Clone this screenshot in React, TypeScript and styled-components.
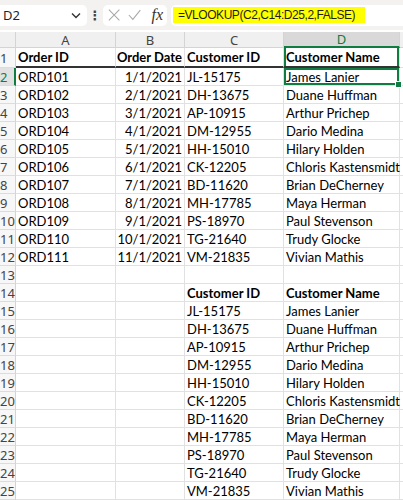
import { Fragment } from 'react';
import styled, { createGlobalStyle } from 'styled-components';

const GlobalStyle = createGlobalStyle`
    html, body {
        margin: 0;
        padding: 0;
        background: #ffffff;
        overflow: hidden;
    }
`;

const GREEN = '#107c41';

const Page = styled.div`
    width: 403px;
    height: 500px;
    overflow: hidden;
    background: #ffffff;
`;

const FormulaBar = styled.div`
    height: 30px;
    background: #f3f2f1;
    display: flex;
    align-items: center;
    box-sizing: border-box;
`;

const NameBox = styled.div`
    width: 87px;
    height: 21px;
    background: #ffffff;
    border-radius: 0 5px 5px 0;
    display: flex;
    align-items: center;
    justify-content: space-between;
    box-sizing: border-box;
    padding: 0 6px 0 3px;
    font-family: "Noto Sans", sans-serif;
    font-size: 13px;
    color: #1f1f1f;
`;

const Dots = styled.div`
    width: 16px;
    text-align: center;
    font-family: "DejaVu Sans", sans-serif;
    font-size: 13px;
    font-weight: bold;
    color: #444;
`;

const ActionBox = styled.div`
    width: 64px;
    height: 21px;
    background: #ffffff;
    border-radius: 5px;
    display: flex;
    align-items: center;
    gap: 8px;
    box-sizing: border-box;
    padding: 0 4px 0 5px;
`;

const FxLabel = styled.span`
    font-family: "Liberation Serif", serif;
    font-style: italic;
    font-size: 16px;
    color: #333;
    margin-left: 2px;
`;

const FormulaInput = styled.div`
    flex: 1;
    height: 21px;
    margin-left: 4px;
    background: #ffffff;
    border-radius: 5px 0 0 5px;
    display: flex;
    align-items: center;
    padding-left: 2px;
`;

const Highlight = styled.span`
    background: #ffff00;
    padding: 1px 10px 0 5px;
    font-family: "Liberation Sans", sans-serif;
    font-size: 12px;
    letter-spacing: -0.45px;
    color: #1f1f1f;
    line-height: 15px;
`;

const Grid = styled.div`
    margin-top: 2px;
    display: grid;
    grid-template-columns: 16px 100px 69px 99px 116px 20px;
    grid-template-rows: 16px 20px;
    grid-auto-rows: 18px;
`;

const ColHead = styled.div<{ $active?: boolean }>`
    background: ${p => (p.$active ? '#d9d9d9' : '#f0f0f0')};
    border-right: 1px solid #d4d4d4;
    border-bottom: ${p => (p.$active ? `2px solid ${GREEN}` : '1px solid #d4d4d4')};
    box-sizing: border-box;
    display: flex;
    align-items: center;
    justify-content: center;
    font-family: "Noto Sans", sans-serif;
    font-size: 13px;
    color: ${p => (p.$active ? GREEN : '#444')};
`;

const RowHead = styled.div<{ $active?: boolean }>`
    background: ${p => (p.$active ? '#e1e1e1' : '#f7f7f7')};
    border-right: ${p => (p.$active ? `2px solid ${GREEN}` : '1px solid #d4d4d4')};
    border-bottom: 1px solid #dcdcdc;
    box-sizing: border-box;
    display: flex;
    align-items: center;
    overflow: hidden;
    font-family: "Noto Sans", sans-serif;
    font-size: 13px;
    color: ${p => (p.$active ? GREEN : '#444')};
    white-space: nowrap;
`;

const Cell = styled.div<{ $bold?: boolean; $right?: boolean; $thick?: boolean; $sel?: 'top' | 'box' }>`
    position: relative;
    border-right: 1px solid #e1e1e1;
    border-bottom: ${p => (p.$thick ? '2px solid #333' : '1px solid #e1e1e1')};
    box-sizing: border-box;
    display: flex;
    align-items: center;
    justify-content: ${p => (p.$right ? 'flex-end' : 'flex-start')};
    padding: 0 2px;
    white-space: nowrap;
    font-family: Lato, sans-serif;
    font-size: 13px;
    font-weight: ${p => (p.$bold ? 700 : 400)};
    color: #000;
    box-shadow: ${p =>
        p.$sel === 'box'
            ? `inset 0 0 0 2px ${GREEN}`
            : p.$sel === 'top'
            ? `inset 2px 0 0 ${GREEN}, inset -2px 0 0 ${GREEN}`
            : 'none'};
`;

const FillHandle = styled.span`
    position: absolute;
    right: -3px;
    bottom: -3px;
    width: 5px;
    height: 5px;
    background: ${GREEN};
    border: 1px solid #fff;
    z-index: 2;
`;

const CloseIcon = () => (
    <svg width="14" height="14" viewBox="0 0 14 14">
        <path d="M1 1 L13 13 M13 1 L1 13" stroke="#a8a8a8" strokeWidth="1.2" fill="none" />
    </svg>
);

const CheckIcon = () => (
    <svg width="15" height="14" viewBox="0 0 15 14">
        <path d="M1 7 L5.5 12 L14 1.5" stroke="#a8a8a8" strokeWidth="1.2" fill="none" />
    </svg>
);

const Chevron = () => (
    <svg width="10" height="7" viewBox="0 0 10 7">
        <path d="M1 1.5 L5 5.5 L9 1.5" stroke="#333" strokeWidth="1.4" fill="none" />
    </svg>
);

const orders: [string, string, string, string][] = [
    ['ORD101', '1/1/2021', 'JL-15175', 'James Lanier'],
    ['ORD102', '2/1/2021', 'DH-13675', 'Duane Huffman'],
    ['ORD103', '3/1/2021', 'AP-10915', 'Arthur Prichep'],
    ['ORD104', '4/1/2021', 'DM-12955', 'Dario Medina'],
    ['ORD105', '5/1/2021', 'HH-15010', 'Hilary Holden'],
    ['ORD106', '6/1/2021', 'CK-12205', 'Chloris Kastensmidt'],
    ['ORD107', '7/1/2021', 'BD-11620', 'Brian DeCherney'],
    ['ORD108', '8/1/2021', 'MH-17785', 'Maya Herman'],
    ['ORD109', '9/1/2021', 'PS-18970', 'Paul Stevenson'],
    ['ORD110', '10/1/2021', 'TG-21640', 'Trudy Glocke'],
    ['ORD111', '11/1/2021', 'VM-21835', 'Vivian Mathis'],
];

export default function App() {
    const lookup = orders.map(o => [o[2], o[3]]);

    return (
        <Page>
            <GlobalStyle />
            <FormulaBar>
                <NameBox>
                    <span>D2</span>
                    <Chevron />
                </NameBox>
                <Dots>⋮</Dots>
                <ActionBox>
                    <CloseIcon />
                    <CheckIcon />
                    <FxLabel>fx</FxLabel>
                </ActionBox>
                <FormulaInput>
                    <Highlight>=VLOOKUP(C2,C14:D25,2,FALSE)</Highlight>
                </FormulaInput>
            </FormulaBar>

            <Grid>
                <ColHead />
                <ColHead>A</ColHead>
                <ColHead>B</ColHead>
                <ColHead>C</ColHead>
                <ColHead $active>D</ColHead>
                <ColHead />

                <RowHead>1</RowHead>
                <Cell $bold $thick>Order ID</Cell>
                <Cell $bold $thick $right>Order Date</Cell>
                <Cell $bold $thick>Customer ID</Cell>
                <Cell $bold $thick $sel="top">Customer Name</Cell>
                <Cell />

                {orders.map((o, i) => (
                    <Fragment key={o[0]}>
                        <RowHead $active={i === 0}>{i + 2}</RowHead>
                        <Cell>{o[0]}</Cell>
                        <Cell $right>{o[1]}</Cell>
                        <Cell>{o[2]}</Cell>
                        <Cell $sel={i === 0 ? 'box' : undefined}>
                            {o[3]}
                            {i === 0 && <FillHandle />}
                        </Cell>
                        <Cell />
                    </Fragment>
                ))}

                <RowHead>13</RowHead>
                <Cell />
                <Cell />
                <Cell />
                <Cell />
                <Cell />

                <RowHead>14</RowHead>
                <Cell />
                <Cell />
                <Cell $bold>Customer ID</Cell>
                <Cell $bold>Customer Name</Cell>
                <Cell />

                {lookup.map((l, i) => (
                    <Fragment key={l[0]}>
                        <RowHead>{i + 15}</RowHead>
                        <Cell />
                        <Cell />
                        <Cell>{l[0]}</Cell>
                        <Cell>{l[1]}</Cell>
                        <Cell />
                    </Fragment>
                ))}
            </Grid>
        </Page>
    );
}
